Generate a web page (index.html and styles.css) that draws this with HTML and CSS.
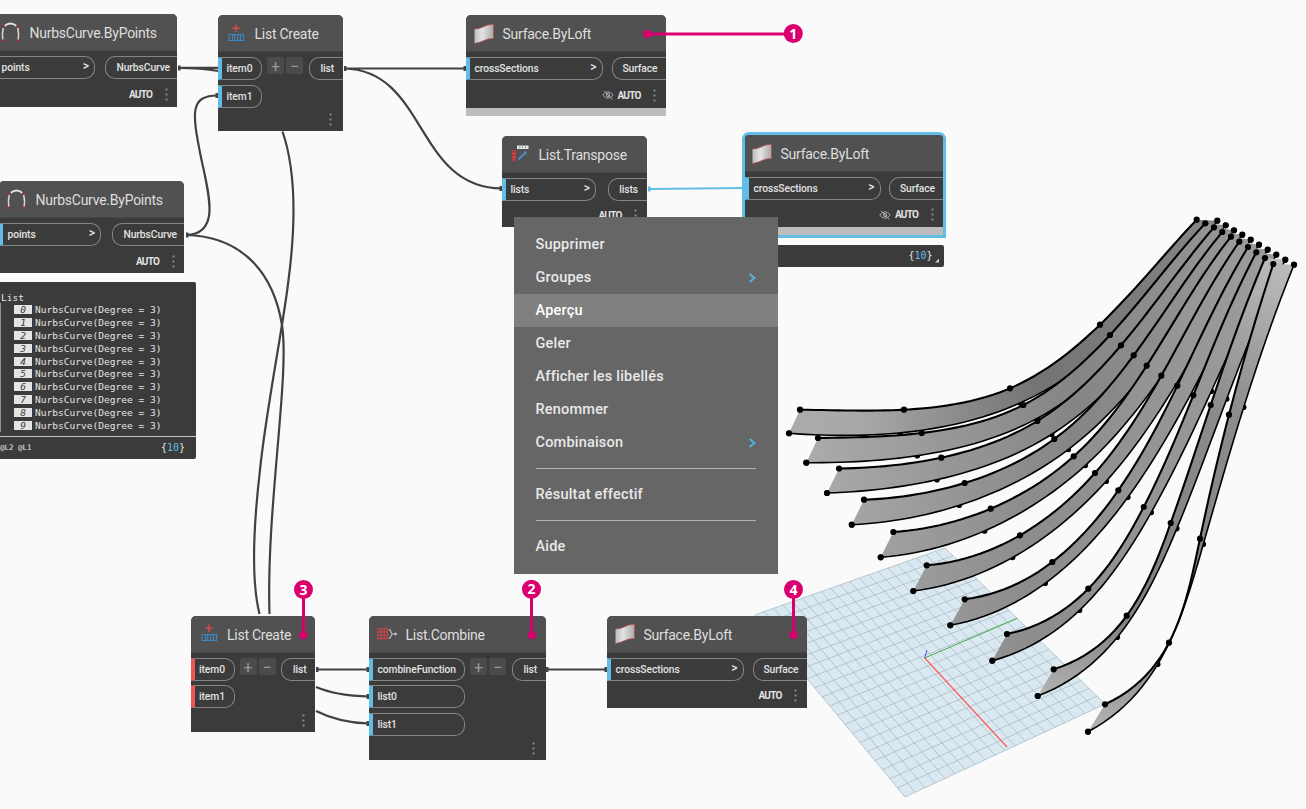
FILE: index.html
```html
<!DOCTYPE html>
<html lang="fr">
<head>
<meta charset="utf-8">
<title>Dynamo</title>
<link rel="stylesheet" href="styles.css">
</head>
<body>
<svg class="defs" width="0" height="0" aria-hidden="true">
  <defs>
    <linearGradient id="sheet" x1="0" y1="0" x2="1" y2="0">
      <stop offset="0" stop-color="#bdbdbd"/><stop offset=".4" stop-color="#e4e4e4"/><stop offset="1" stop-color="#a9a9a9"/>
    </linearGradient>
    <symbol id="i-curve" viewBox="0 0 22 24">
      <path d="M4.500 5Q10.500 0 16.500 5" fill="none" stroke="#e4e4e4" stroke-width="1.800"/>
      <path d="M3.300 7Q1.800 12 2.800 19M17.700 7Q19.200 12 18.200 19" fill="none" stroke="#d6d6d6" stroke-width="1.600"/>
      <path d="M2.500 4.500H5V7H2.500zM16 4.500h2.500V7H16zM1.800 18.500h2.500V21H1.800zM16.700 18.500h2.500V21h-2.500z" fill="#963638"/>
    </symbol>
    <symbol id="i-create" viewBox="0 0 22 24">
      <path d="M11 2.500v7.500M7.300 6.200h7.400" stroke="#d8484b" stroke-width="1.500"/>
      <path d="M4 12.500h14.500v6H4zM7.500 12.500v6M9.700 12.500v6M12.800 12.500v6M15.500 12.500v6" fill="none" stroke="#3d87c5" stroke-width="1.100"/>
    </symbol>
    <symbol id="i-loft" viewBox="0 0 22 24">
      <path d="M1.500 7Q6 7 10 5Q14 2.500 20.500 2.200V16.500Q15 16.500 11 18.500Q7 20.500 1.500 21.500z" fill="url(#sheet)"/>
      <path d="M1.500 7Q6 7 10 5Q14 2.500 20.500 2.200V16.500Q15 16.500 11 18.500Q7 20.500 1.500 21.500" fill="none" stroke="#b84a4a" stroke-width=".8"/>
    </symbol>
    <symbol id="i-transpose" viewBox="0 0 22 24">
      <path d="M8 3.500h11.500v3.500H8z" fill="#e6e6e6"/><path d="M10.800 4v2M13.700 4v2M16.600 4v2" stroke="#666" stroke-width=".6"/>
      <path d="M3 8h4V19H3z" fill="#b23a3d"/><path d="M3.500 11.500h3M3.500 15h3" stroke="#e0686a" stroke-width=".7"/>
      <path d="M9.500 17.500L16.500 10.500" stroke="#4a8fca" stroke-width="1.900" fill="none"/><path d="M14 9.500H17.500V13z" fill="#4a8fca"/>
    </symbol>
    <symbol id="i-combine" viewBox="0 0 24 24">
      <path d="M2 6h10.500v11H2zM2 9.700h10.500M2 13.300h10.500M5.500 6v11M9 6v11" stroke="#cc4447" fill="none" stroke-width="1.200"/>
      <path d="M14 7.500h1.200L17.500 12L15.200 16.500H14M17.500 12H22M20.500 10.500l2 1.500-2 1.500" stroke="#c8c8c8" fill="none" stroke-width="1.100"/>
    </symbol>
    <symbol id="i-hidden" viewBox="0 0 12 10">
      <path d="M.7 5Q6-1.500 11.300 5Q6 11.500.7 5zM2 .8L10.500 9.500" fill="none" stroke="#a8a8a8" stroke-width="1"/>
      <circle cx="6" cy="5" r="1.700" fill="none" stroke="#a8a8a8"/>
    </symbol>
    <symbol id="i-more" viewBox="0 0 3 13"><path d="M.5.5h2v2h-2zM.5 5.500h2v2h-2zM.5 10.500h2v2h-2z" fill="#888"/></symbol>
  </defs>
</svg>

<main class="workspace">
  <svg class="layer" id="scene" viewBox="0 0 1306 809">
    <defs>
      <linearGradient id="g-first" gradientUnits="userSpaceOnUse" x1="790" y1="0" x2="1240" y2="0"><stop offset="0" stop-color="#aaa"/><stop offset=".15" stop-color="#a9a9a9"/><stop offset=".55" stop-color="#747474"/><stop offset=".8" stop-color="#7d7d7d"/><stop offset="1" stop-color="#8c8c8c"/></linearGradient>
      <linearGradient id="g-mid" gradientUnits="userSpaceOnUse" x1="810" y1="0" x2="1250" y2="0"><stop offset="0" stop-color="#ababab"/><stop offset=".6" stop-color="#858585"/><stop offset="1" stop-color="#979797"/></linearGradient>
      <linearGradient id="g-low" gradientUnits="userSpaceOnUse" x1="870" y1="0" x2="1270" y2="0"><stop offset="0" stop-color="#a2a2a2"/><stop offset=".4" stop-color="#8c8c8c"/><stop offset="1" stop-color="#9c9c9c"/></linearGradient>
      <linearGradient id="g-last" gradientUnits="userSpaceOnUse" x1="1030" y1="710" x2="1290" y2="265"><stop offset="0" stop-color="#bbb"/><stop offset=".25" stop-color="#808080"/><stop offset=".7" stop-color="#8c8c8c"/><stop offset="1" stop-color="#bcbcbc"/></linearGradient>
    </defs>
  </svg>

  <svg class="layer" viewBox="0 0 1306 809">
    <g class="wire">
      <path d="M178 67.800H218M178 67.800C195 67.800 205 68.500 218 71"/>
      <path d="M186 235C222 234 208 192 200.500 155C192 112 190 95.500 218 95.500"/>
      <path d="M186 235C235 236 272 265 282 325C290 375 266 510 269.500 614"/>
      <path d="M282.500 131.500C294 165 297 215 288.500 280C283 328 266 410 260 470C253 530 251 580 259.500 614"/>
      <path d="M344 68.500H466M344 68.500C427 70 415 188 502 188.500"/>
      <path d="M316 669.500H369M316 687C330 693 345 696 369 696.500M316 711C330 718 345 723 369 723.500M546 669.500H607"/>
    </g>
    <path class="wire wire-active" d="M648 189L743 188"/>
    <g fill="#444"><path d="M178 65.500h2.500v5H178zM186 232.500h2.500v5H186zM344 66h2.500v5H344zM463.500 66h2.500v5h-2.500zM499.500 186h2.500v5h-2.500zM215.500 93h2.500v5h-2.500zM316 667h2.500v5H316zM366.500 667h2.500v5h-2.500zM366.500 694h2.500v5h-2.500zM366.500 721h2.500v5h-2.500zM546 667h2.500v5H546zM604.500 667h2.500v5h-2.500z"/></g>
    <path d="M648 186.500h2.500v5H648z" fill="#62bde6"/>
  </svg>

  <section class="node n-points-a">
    <header><svg><use href="#i-curve"/></svg><h2>NurbsCurve.ByPoints</h2></header>
    <div class="ports"><div class="ins"><span class="in">points<b>&gt;</b></span></div><span class="out">NurbsCurve</span></div>
    <footer><span>AUTO</span><svg class="more"><use href="#i-more"/></svg></footer>
  </section>
  <section class="node n-points-b">
    <header><svg><use href="#i-curve"/></svg><h2>NurbsCurve.ByPoints</h2></header>
    <div class="ports"><div class="ins"><span class="in">points<b>&gt;</b></span></div><span class="out">NurbsCurve</span></div>
    <footer><span>AUTO</span><svg class="more"><use href="#i-more"/></svg></footer>
  </section>
  <section class="node n-create-a">
    <header><svg><use href="#i-create"/></svg><h2>List Create</h2></header>
    <div class="ports"><div class="ins"><span class="in">item0</span><span class="in">item1</span></div><div class="step"><i>+</i><i>−</i></div><span class="out">list</span></div>
    <footer><svg class="more"><use href="#i-more"/></svg></footer>
  </section>
  <section class="node n-loft-a">
    <header><svg><use href="#i-loft"/></svg><h2>Surface.ByLoft</h2></header>
    <div class="ports"><div class="ins"><span class="in">crossSections<b>&gt;</b></span></div><span class="out">Surface</span></div>
    <footer><svg class="eye"><use href="#i-hidden"/></svg><span>AUTO</span><svg class="more"><use href="#i-more"/></svg></footer>
    <div class="strip"></div>
  </section>
  <section class="node n-transpose">
    <header><svg><use href="#i-transpose"/></svg><h2>List.Transpose</h2></header>
    <div class="ports"><div class="ins"><span class="in">lists<b>&gt;</b></span></div><span class="out">lists</span></div>
    <footer><span>AUTO</span><svg class="more"><use href="#i-more"/></svg></footer>
  </section>
  <section class="node n-loft-b selected">
    <header><svg><use href="#i-loft"/></svg><h2>Surface.ByLoft</h2></header>
    <div class="ports"><div class="ins"><span class="in">crossSections<b>&gt;</b></span></div><span class="out">Surface</span></div>
    <footer><svg class="eye"><use href="#i-hidden"/></svg><span>AUTO</span><svg class="more"><use href="#i-more"/></svg></footer>
    <div class="strip"></div>
  </section>
  <section class="node n-create-b missing">
    <header><svg><use href="#i-create"/></svg><h2>List Create</h2></header>
    <div class="ports"><div class="ins"><span class="in">item0</span><span class="in">item1</span></div><div class="step"><i>+</i><i>−</i></div><span class="out">list</span></div>
    <footer><svg class="more"><use href="#i-more"/></svg></footer>
  </section>
  <section class="node n-combine">
    <header><svg><use href="#i-combine"/></svg><h2>List.Combine</h2></header>
    <div class="ports"><div class="ins"><span class="in">combineFunction</span><span class="in">list0</span><span class="in">list1</span></div><div class="step"><i>+</i><i>−</i></div><span class="out">list</span></div>
    <footer><svg class="more"><use href="#i-more"/></svg></footer>
  </section>
  <section class="node n-loft-c">
    <header><svg><use href="#i-loft"/></svg><h2>Surface.ByLoft</h2></header>
    <div class="ports"><div class="ins"><span class="in">crossSections<b>&gt;</b></span></div><span class="out">Surface</span></div>
    <footer><span>AUTO</span><svg class="more"><use href="#i-more"/></svg></footer>
  </section>

  <section class="preview preview-list">
    <p class="preview-title">List</p>
    <ol>
      <li><em>0</em>NurbsCurve(Degree = 3)</li><li><em>1</em>NurbsCurve(Degree = 3)</li>
      <li><em>2</em>NurbsCurve(Degree = 3)</li><li><em>3</em>NurbsCurve(Degree = 3)</li>
      <li><em>4</em>NurbsCurve(Degree = 3)</li><li><em>5</em>NurbsCurve(Degree = 3)</li>
      <li><em>6</em>NurbsCurve(Degree = 3)</li><li><em>7</em>NurbsCurve(Degree = 3)</li>
      <li><em>8</em>NurbsCurve(Degree = 3)</li><li><em>9</em>NurbsCurve(Degree = 3)</li>
    </ol>
    <div class="levels"><small>@L2 @L1</small><span class="count">{<b>10</b>}</span></div>
  </section>
  <section class="preview preview-count"><span class="count">{<b>10</b>}</span><svg class="grip" viewBox="0 0 5 5"><path d="M5 0V5H0z" fill="#ccc"/></svg></section>

  <nav class="menu">
    <a>Supprimer</a>
    <a>Groupes<svg viewBox="0 0 8 10"><path d="M1.500 1L6.500 5L1.500 9"/></svg></a>
    <a class="on">Aperçu</a>
    <a>Geler</a>
    <a>Afficher les libellés</a>
    <a>Renommer</a>
    <a>Combinaison<svg viewBox="0 0 8 10"><path d="M1.500 1L6.500 5L1.500 9"/></svg></a>
    <hr>
    <a>Résultat effectif</a>
    <hr>
    <a>Aide</a>
  </nav>

  <svg class="layer callouts" viewBox="0 0 1306 809">
    <path d="M647 34H793M303.500 590V635.500M531.500 590V635M793.500 590V635"/>
    <circle cx="647.200" cy="34" r="4"/><circle cx="303.200" cy="635.300" r="4"/><circle cx="532" cy="635.300" r="4"/><circle cx="793.500" cy="635" r="4"/>
    <circle cx="793.300" cy="33.500" r="9.500"/><circle cx="303.500" cy="589.500" r="9.500"/><circle cx="531.500" cy="589.300" r="9.500"/><circle cx="793.500" cy="589.500" r="9.500"/>
    <text x="793.300" y="38.500">1</text><text x="303.500" y="594.500">3</text><text x="531.500" y="594.300">2</text><text x="793.500" y="594.500">4</text>
  </svg>
</main>
<script src="scene.js"></script>
</body>
</html>
```

FILE: styles.css
```css
* { box-sizing: border-box; }
body { margin: 0; background: #fafafa; font-family: Roboto, "Open Sans", sans-serif; }
h2, p, ol { margin: 0; padding: 0; font-weight: 400; list-style: none; }
.defs { position: absolute; }
.workspace { position: relative; width: 1306px; height: 809px; overflow: hidden; }
.layer { position: absolute; inset: 0; width: 1306px; height: 809px; }
.wire { fill: none; stroke: #414141; stroke-width: 2.2; }
.wire-active { stroke: #62bde6; }

.node { position: absolute; display: flex; flex-direction: column; background: #3b3b3b; border-radius: 5px 5px 0 0; color: #e2e2e2; }
.node header { display: flex; align-items: center; gap: 7.5px; height: 37px; padding: 1px 0 0 7px; background: #515151; border-radius: 5px 5px 0 0; border-bottom: 1px solid #464646; }
.node header svg { width: 22px; height: 24px; }
.node h2 { padding-top: 1px; font-size: 14px; line-height: 20px; letter-spacing: -.25px; white-space: nowrap; color: #dedede; }
.ports { display: flex; align-items: flex-start; padding-top: 5px; font-size: 10.3px; font-weight: 500; line-height: 21px; letter-spacing: -.1px; }
.ins { display: flex; flex-direction: column; gap: 4.5px; }
.in { display: flex; justify-content: space-between; height: 23px; padding: 0 5px 0 4.5px; border: 1px solid #858585; border-left: 4px solid #62bde6; border-radius: 0 10px 10px 0; }
.in b { font-weight: 500; font-size: 12px; line-height: 19px; }
.missing .in { border-left-color: #ee5557; }
.out { margin-left: auto; height: 23px; padding-right: 7px; border: 1px solid #858585; border-right: 0; border-radius: 10px 0 0 10px; text-align: right; }
.step { display: flex; gap: 2px; margin-left: 5px; }
.step i { width: 17px; height: 17px; background: #4b4b4b; border-radius: 2px; color: #999; font: 400 16px/19px Roboto, sans-serif; text-align: center; }
.node footer { display: flex; flex: 1; align-items: center; justify-content: flex-end; padding: 3px 9.5px 0 0; font-size: 10px; font-weight: 700; letter-spacing: -.8px; }
.more { width: 3px; height: 13px; margin-left: 12.5px; }
.eye { width: 12px; height: 10px; margin-right: 4px; }
.strip { height: 8.5px; background: #bdbdbd; }

.n-points-a { left: -7px; top: 14px; width: 184px; height: 92.5px; }
.n-points-b { left: -1px; top: 181px; width: 185px; height: 92px; }
.n-points-a .in, .n-points-b .in { width: 102px; }
.n-points-a .out, .n-points-b .out { width: 72px; }
.n-create-a { left: 218px; top: 15px; width: 124.5px; height: 115.5px; }
.n-create-b { left: 190.500px; top: 615.5px; width: 124.5px; height: 116px; }
.n-create-a .in, .n-create-b .in { width: 44px; }
.n-create-a .out, .n-create-b .out, .n-combine .out { width: 34px; padding-right: 8.5px; }
.n-create-a footer, .n-create-b footer, .n-combine footer { align-items: flex-end; padding: 0 10.5px 5px 0; }
.n-loft-a { left: 466px; top: 15px; width: 199.500px; height: 101px; }
.n-loft-b { left: 742px; top: 132px; width: 204px; height: 106px; }
.n-loft-c { left: 607px; top: 615.5px; width: 199.500px; height: 92.5px; }
.n-loft-a .in, .n-loft-b .in, .n-loft-c .in { width: 136.5px; }
.n-loft-a .out, .n-loft-b .out, .n-loft-c .out { width: 54px; padding-right: 8px; }
.n-transpose { left: 502px; top: 135.5px; width: 144.500px; height: 91.5px; }
.n-transpose .in { width: 94px; }
.n-transpose .out { width: 38.500px; padding-right: 8.5px; }
.n-combine { left: 369px; top: 615.5px; width: 176.500px; height: 144px; }
.n-combine .in { width: 96px; }
.selected { border: 3px solid #62bde6; border-radius: 7px 7px 0 0; }
.selected header { padding-left: 6px; }
.selected .in { width: 135.5px; }

.preview { position: absolute; background: #3b3b3b; border-radius: 2px; color: #e4e4e4; font-family: "DejaVu Sans Mono", monospace; font-size: 9.55px; }
.preview-list { left: -4px; top: 282px; width: 200px; height: 177px; padding-top: 10px; }
.preview-title { padding-left: 5px; line-height: 11px; }
.preview ol { width: 170px; margin-left: 4px; padding-left: 13px; border-left: 1.500px solid #929292; }
.preview li { display: flex; align-items: center; gap: 3px; height: 12.9px; line-height: 13px; white-space: nowrap; }
.preview em { width: 18px; height: 9px; background: #e4e4e4; color: #3b3b3b; line-height: 9px; text-align: center; }
.levels { display: flex; align-items: center; justify-content: space-between; height: 22.500px; margin-top: 4px; padding: 0 11px 0 4px; border-top: 1px solid #c4c4c4; }
.levels small { font-size: 7.500px; }
.count { font-size: 10px; }
.count b { font-weight: 400; color: #62bde6; }
.preview-count { left: 743px; top: 244.500px; width: 201px; height: 22.500px; display: flex; align-items: center; justify-content: flex-end; padding-right: 5px; }
.grip { width: 4px; height: 5px; margin: 10px 0 0 2.500px; }

.menu { position: absolute; left: 513.500px; top: 217px; width: 264px; height: 356.500px; padding-top: 10.5px; background: #666; color: #e9e9e9; font-size: 14.500px; font-weight: 500; letter-spacing: .2px; }
.menu a { display: flex; align-items: center; justify-content: space-between; height: 33px; padding: 1px 22px 0; }
.menu .on { background: #808080; color: #fff; }
.menu svg { width: 8px; height: 10px; }
.menu svg path { fill: none; stroke: #55b4e0; stroke-width: 1.800; }
.menu hr { height: 1px; margin: 9px 22px; border: 0; background: #b4b4b4; }

.callouts path { stroke: #d9006e; stroke-width: 3; fill: none; }
.callouts circle { fill: #d9006e; }
.callouts text { fill: #fff; font-family: "Noto Sans", sans-serif; font-weight: 700; font-size: 14px; text-anchor: middle; }

.major { stroke: #8b9ea8; stroke-width: .6; fill: none; opacity: .8; }
.minor { stroke: #b4d0de; stroke-width: .3; fill: none; opacity: .5; }
.edge-front { stroke: #000; stroke-width: 2.100; fill: none; }
.edge-back { stroke: #000; stroke-width: 1.600; fill: none; }
```

FILE: scene.js
```javascript
const svg = document.getElementById('scene');
function add(tag, attrs) {
  const el = document.createElementNS('http://www.w3.org/2000/svg', tag);
  for (const k in attrs) el.setAttribute(k, attrs[k]);
  svg.appendChild(el);
}

// Ground plane: corners left, top, right, bottom.
const L = [754.5, 615], T = [945, 548], R = [1105, 704], B = [905, 797];
const mix = (a, b, t) => [a[0] + (b[0] - a[0]) * t, a[1] + (b[1] - a[1]) * t];
add('path', { d: `M${L}L${T}L${R}L${B}Z`, fill: '#dfecf4' });
function grid(n, cls) {
  let d = '';
  for (let i = 0; i <= n; i++) {
    const t = i / n;
    d += `M${mix(L, T, t)}L${mix(B, R, t)}M${mix(L, B, t)}L${mix(T, R, t)}`;
  }
  add('path', { d, class: cls });
}
grid(100, 'minor');
grid(20, 'major');
add('path', { d: 'M924.7 658L1007 747', stroke: '#ff5a5a', 'stroke-width': 1.2, fill: 'none' });
add('path', { d: 'M924.7 658L1017.3 618.3', stroke: '#4aa84e', fill: 'none' });
add('path', { d: 'M924.7 658L927 650', stroke: '#4a55ee', fill: 'none' });

// Each strip: five points of its front curve, five of its back curve.
const strips = [
  [[[800,409.7],[904,409.7],[1010,388.3],[1100,324.7],[1196.7,219.7]], [[789,433.3],[900.3,432.8],[1020,403],[1127,328.7],[1217.3,220.7]]],
  [[[818,438],[921.7,433],[1023.3,405],[1110,335],[1205.3,223.3]], [[806.3,462.7],[917.3,455.7],[1037,418.5],[1136,338],[1225.7,225.3]]],
  [[[839,468.5],[941.3,457.7],[1037.3,421],[1121,345.3],[1214,227.3]], [[827,493],[937,479.7],[1051.7,434.3],[1146,347.3],[1234,230.3]]],
  [[[864,499.7],[964.7,483],[1054.3,439],[1133.7,355.3],[1222.3,232]], [[851.7,524.7],[959.3,505.3],[1068.3,449.5],[1157.7,356],[1242.3,234.7]]],
  [[[893.3,532],[990.7,508.7],[1073.7,456.3],[1146.7,365.7],[1231,236.7]], [[880.7,557.3],[984.6,530.9],[1085.3,465.5],[1169,365.7],[1250.7,239.7]]],
  [[[926.7,565.3],[1020,535.3],[1095,473],[1161.3,375.7],[1239.3,241.7]], [[913.3,591],[1012.6,557.5],[1106.2,481.2],[1182,374.4],[1259,244.7]]],
  [[[964.7,599.3],[1052.3,562],[1118.3,490.3],[1177.3,385.7],[1248,247]], [[950.3,625.3],[1045.2,583.3],[1127.8,497.3],[1196.7,383],[1267.7,249.7]]],
  [[[1007,634],[1088.3,588.7],[1143.7,507],[1193.3,395.3],[1256.3,252.3]], [[992.3,660.7],[1079.5,610.3],[1151.2,512.5],[1211.3,391.3],[1276.3,254.7]]],
  [[[1053.7,669.3],[1126.7,615.7],[1170.7,523],[1210.7,405],[1265,258]], [[1037.7,696],[1117.3,637.2],[1176.8,528.6],[1226.7,399],[1285.3,259.7]]],
  [[[1105,704.3],[1169,642.7],[1200,538.7],[1229,414.7],[1273.3,264]], [[1088,731.7],[1157.7,664.3],[1203.3,544.3],[1243.7,407.3],[1294,264.7]]]
];

function solve(rows, rhs) {
  const n = rows.length, m = rows.map((r, i) => [...r, rhs[i]]);
  for (let c = 0; c < n; c++) {
    let p = c;
    for (let r = c + 1; r < n; r++) if (Math.abs(m[r][c]) > Math.abs(m[p][c])) p = r;
    [m[c], m[p]] = [m[p], m[c]];
    for (let r = 0; r < n; r++) if (r !== c) {
      const f = m[r][c] / m[c][c];
      for (let k = c; k <= n; k++) m[r][k] -= f * m[c][k];
    }
  }
  return m.map((r, i) => r[n] / r[i]);
}

// Interpolating cubic spline with one interior knot, sampled as a polyline.
function spline(pts) {
  const t = [0];
  for (let i = 1; i < pts.length; i++) t.push(t[i - 1] + Math.hypot(pts[i][0] - pts[i - 1][0], pts[i][1] - pts[i - 1][1]));
  const u = t.map(v => v / t[4]);
  const basis = v => [1, v, v * v, v ** 3, Math.max(0, v - u[2]) ** 3];
  const rows = u.map(basis);
  const cx = solve(rows, pts.map(p => p[0])), cy = solve(rows, pts.map(p => p[1]));
  const out = [];
  for (let i = 0; i <= 60; i++) {
    const b = basis(i / 60);
    out.push([0, 1].map(k => b.reduce((s, w, j) => s + w * (k ? cy : cx)[j], 0).toFixed(2)));
  }
  return out;
}

strips.forEach(([front, back], i) => {
  const a = spline(front), b = spline(back);
  const fill = i === 0 ? 'g-first' : i < 4 ? 'g-mid' : i < 8 ? 'g-low' : 'g-last';
  back.forEach(p => add('circle', { cx: p[0], cy: p[1], r: 2.8 }));
  add('path', { d: 'M' + a.join('L') + 'L' + b.slice().reverse().join('L') + 'Z', fill: `url(#${fill})` });
  add('path', { d: 'M' + b.join('L'), class: 'edge-back' });
  add('path', { d: 'M' + a.join('L'), class: 'edge-front' });
});
strips.forEach(([front, back]) => {
  front.forEach(p => add('circle', { cx: p[0], cy: p[1], r: 3.1 }));
  [back[0], back[4]].forEach(p => add('circle', { cx: p[0], cy: p[1], r: 3.1 }));
});
```
